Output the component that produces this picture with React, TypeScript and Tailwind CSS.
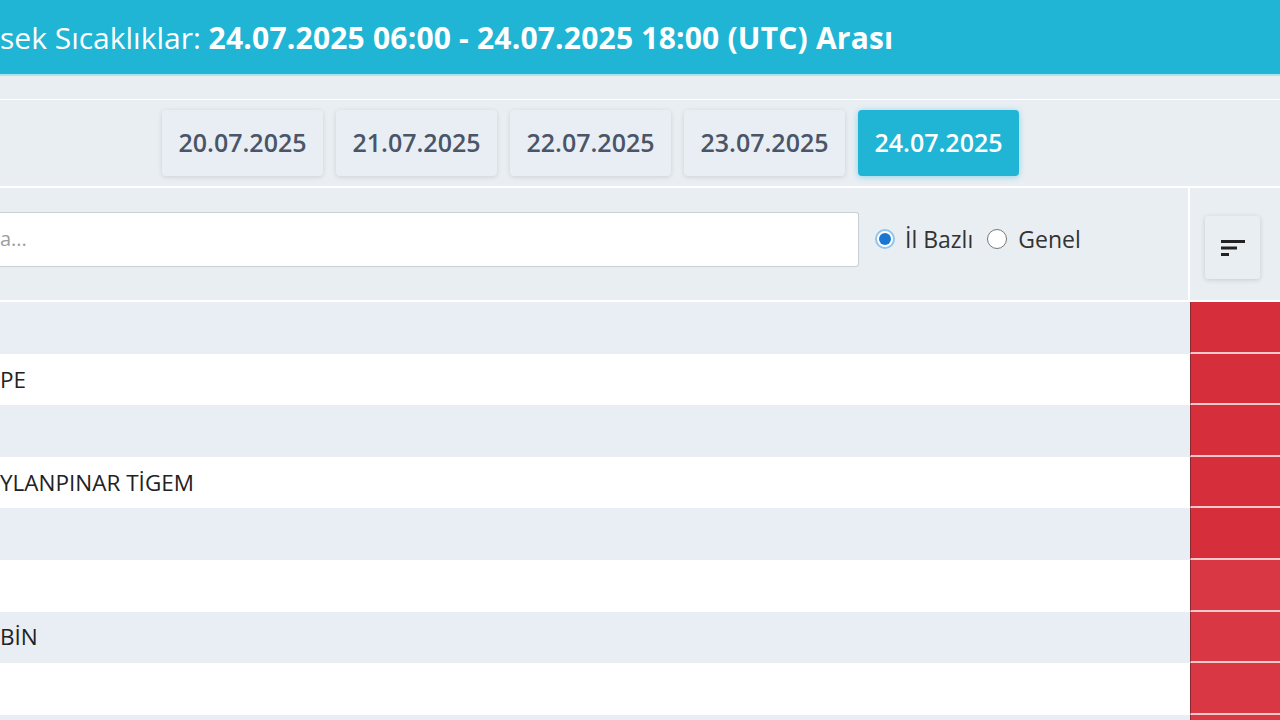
import React from 'react';

const dates = ['20.07.2025', '21.07.2025', '22.07.2025', '23.07.2025', '24.07.2025'];

const rows = [
  { name: '', bg: 'bg-[#e8eef3]', red: 'bg-[#d72e3b]' },
  { name: 'PE', bg: 'bg-white', red: 'bg-[#d72e3b]' },
  { name: '', bg: 'bg-[#e8eef3]', red: 'bg-[#d72e3b]' },
  { name: 'YLANPINAR TİGEM', bg: 'bg-white', red: 'bg-[#d72e3b]' },
  { name: '', bg: 'bg-[#e8eef3]', red: 'bg-[#d72e3b]' },
  { name: '', bg: 'bg-white', red: 'bg-[#d93743]' },
  { name: 'BİN', bg: 'bg-[#e8eef3]', red: 'bg-[#d93743]' },
  { name: '', bg: 'bg-white', red: 'bg-[#d93743]' },
  { name: '', bg: 'bg-[#e8eef3]', red: 'bg-[#d93743]' },
];

const SortIcon = () => (
  <svg width="26" height="20" viewBox="0 0 26 20" fill="#222">
    <rect x="1" y="2" width="24" height="3" />
    <rect x="1" y="8.5" width="16" height="3" />
    <rect x="1" y="15" width="8" height="3" />
  </svg>
);

export default function App() {
  return (
    <div className="w-[1280px] h-[720px] overflow-hidden bg-[#e9eef3] font-['Open_Sans',sans-serif]">
      <div className="h-[76px] bg-[#20b5d5] flex items-center text-white text-[30px] border-b-2 border-[#a9e5f1]">
        <span className="whitespace-nowrap">
          sek Sıcaklıklar: <span className="font-bold tracking-[0.2px]">24.07.2025 06:00 - 24.07.2025 18:00 (UTC) Arası</span>
        </span>
      </div>
      <div className="h-[24px] border-b border-white" />

      <div className="h-[88px] flex items-center pl-[162px] gap-[13px] border-b-2 border-white">
        {dates.map((d, i) => (
          <button
            key={d}
            className={`w-[161px] h-[66px] rounded-[4px] text-[25px] font-semibold flex items-center justify-center ${
              i === 4
                ? 'bg-[#20b5d5] text-white shadow-[0_1px_6px_rgba(32,181,213,0.45)]'
                : 'bg-[#e9eef4] text-[#4a5567] shadow-[0_1px_5px_rgba(0,0,0,0.12)]'
            }`}
          >
            {d}
          </button>
        ))}
      </div>

      <div className="flex h-[114px] border-b-2 border-white">
        <div className="w-[1188px] flex items-center pb-[10px]">
          <div className="w-[859px] h-[55px] bg-white border border-l-0 border-[#c9ced3] rounded-r-[3px] flex items-center text-[20px] text-[#9aa0a6]">
            a...
          </div>
          <div className="flex items-center ml-[16px] text-[23px] text-[#333]">
            <span className="w-[20px] h-[20px] rounded-full border-2 border-[#8fc6ec] bg-white flex items-center justify-center">
              <span className="w-[12px] h-[12px] rounded-full bg-[#1b76d2]" />
            </span>
            <span className="ml-[10px]">İl Bazlı</span>
            <span className="ml-[14px] w-[20px] h-[20px] rounded-full border-[1.5px] border-[#777] bg-white" />
            <span className="ml-[11px]">Genel</span>
          </div>
        </div>
        <div className="flex-1 border-l-2 border-white pl-[15px] pt-[28px]">
          <div className="w-[55px] h-[63px] bg-[#e9eef3] rounded-[3px] shadow-[0_1px_5px_rgba(0,0,0,0.15)] flex items-center justify-center">
            <SortIcon />
          </div>
        </div>
      </div>

      <div className="flex flex-col">
        {rows.map((r, i) => (
          <div key={i} className={`flex h-[51.6px] ${r.bg}`}>
            <div className="w-[1190px] flex items-center text-[22.5px] text-[#222]">{r.name}</div>
            <div className={`flex-1 ${r.red} border-l border-[#8a2a30] border-b-2 border-b-[#f3c9cc]`} />
          </div>
        ))}
      </div>
    </div>
  );
}
